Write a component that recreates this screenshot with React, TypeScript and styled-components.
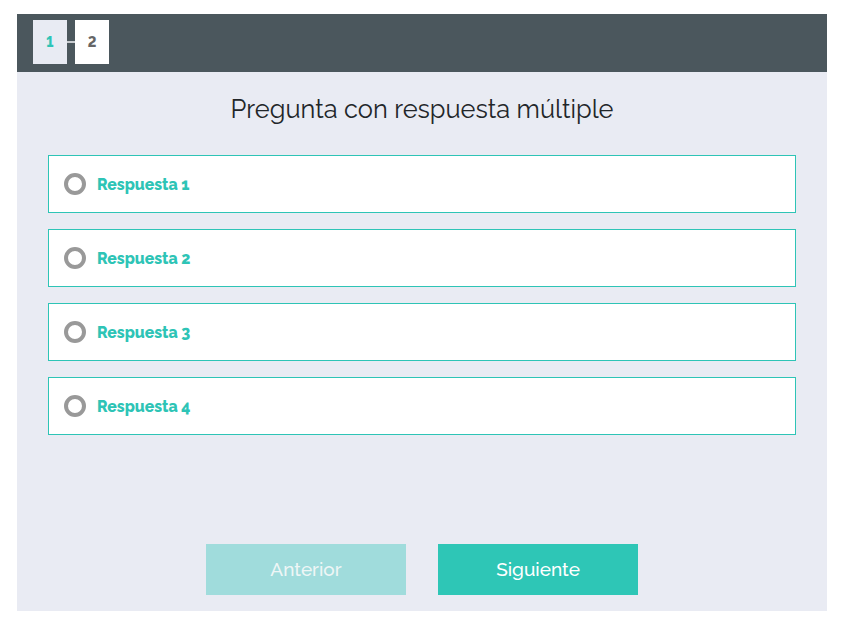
import styled, { createGlobalStyle } from 'styled-components';

const GlobalStyle = createGlobalStyle`
    body {
        margin: 0;
        background: #FFFFFF;
        font-family: Raleway, Lato, "Noto Sans", sans-serif;
    }
`;

const Page = styled.div`
    padding: 14px 19px 16px 17px;
`;

const Panel = styled.div`
    width: 810px;
    height: 597px;
    background-color: #E9EBF3;
    display: flex;
    flex-direction: column;
`;

const Header = styled.div`
    height: 58px;
    background-color: #4B575D;
    display: flex;
    align-items: flex-start;
    padding: 6px 16px 0;
    box-sizing: border-box;
`;

const Step = styled.div<{active: boolean}>`
    width: 34px;
    height: 44px;
    display: flex;
    align-items: center;
    justify-content: center;
    background-color: ${props => props.active ? '#E8EBF3' : '#FFFFFF'};
    color: ${props => props.active ? '#2EC4B6' : '#666666'};
    font-weight: 800;
    font-size: 14px;
    font-variant-numeric: lining-nums;
`;

const Connector = styled.div`
    width: 8px;
    height: 2px;
    margin-top: 21px;
    background-color: #C8CCD0;
`;

const Title = styled.h1`
    margin: 21px 0 0;
    text-align: center;
    font-size: 25.4px;
    font-weight: 400;
    color: #222629;
    line-height: 32px;
`;

const Options = styled.div`
    display: flex;
    flex-direction: column;
    gap: 16px;
    padding: 0 31px;
    margin-top: 30px;
`;

const Option = styled.label`
    height: 58px;
    box-sizing: border-box;
    border: 1px solid #2EC4B6;
    background-color: #FFFFFF;
    display: flex;
    align-items: center;
    padding-left: 15px;
    gap: 11px;
    cursor: pointer;
`;

const Radio = styled.span`
    width: 22px;
    height: 22px;
    box-sizing: border-box;
    border: 4px solid #999999;
    border-radius: 50%;
`;

const OptionText = styled.span`
    color: #2EC4B6;
    font-weight: 800;
    font-size: 15.8px;
`;

const Footer = styled.div`
    margin-top: auto;
    display: flex;
    justify-content: center;
    gap: 32px;
    padding-bottom: 16px;
`;

const Button = styled.button<{disabled?: boolean}>`
    width: 200px;
    height: 51px;
    border: 0;
    padding: 0 0 2px;
    font-family: inherit;
    font-size: 19px;
    font-weight: 500;
    color: ${props => props.disabled ? '#EEF6F6' : '#FFFFFF'};
    background-color: ${props => props.disabled ? '#A0DCDC' : '#2EC6B6'};
`;

const answers = ['Respuesta 1', 'Respuesta 2', 'Respuesta 3', 'Respuesta 4'];

export default function App() {
    return (
        <Page>
            <GlobalStyle />
            <Panel>
                <Header>
                    <Step active>1</Step>
                    <Connector />
                    <Step active={false}>2</Step>
                </Header>
                <Title>Pregunta con respuesta múltiple</Title>
                <Options>
                    {answers.map(a =>
                        <Option key={a}>
                            <Radio />
                            <OptionText>{a}</OptionText>
                        </Option>
                    )}
                </Options>
                <Footer>
                    <Button disabled>Anterior</Button>
                    <Button>Siguiente</Button>
                </Footer>
            </Panel>
        </Page>
    );
}
